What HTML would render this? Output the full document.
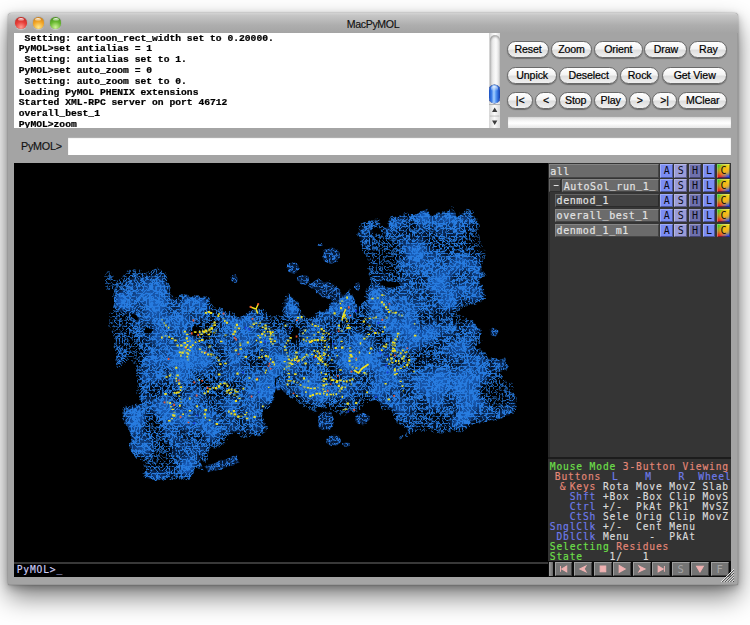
<!DOCTYPE html>
<html>
<head>
<meta charset="utf-8">
<title>MacPyMOL</title>
<style>
html,body{margin:0;padding:0;}
body{width:750px;height:625px;overflow:hidden;background:#fff;position:relative;font-family:"Liberation Sans",sans-serif;}
.abs{position:absolute;}
#win{position:absolute;left:8px;top:13.4px;width:729.5px;height:571.3px;background:#a4a4a4;border-radius:3.5px 3.5px 1.5px 1.5px;
 box-shadow:0 12px 26px rgba(0,0,0,0.5),0 3px 9px rgba(0,0,0,0.26),0 0 1.5px rgba(0,0,0,0.45),inset -1px 0 0 rgba(0,0,0,.06),inset 0 -1px 0 rgba(0,0,0,.08);}
#title{position:absolute;left:0;top:0;width:729.5px;height:19.6px;border-radius:3.5px 3.5px 0 0;
 background:linear-gradient(#d4d4d4 0%,#c6c6c6 12%,#aeaeae 60%,#a4a4a4 100%);}
#title span{position:absolute;left:0;width:730px;top:4.8px;text-align:center;font-size:10.6px;line-height:12px;color:#111;letter-spacing:-0.35px;-webkit-text-stroke:0.15px #111;}
.tl{position:absolute;top:4px;width:11.4px;height:11.4px;border-radius:50%;box-shadow:0 0 1px rgba(0,0,0,.55),0 1px 1px rgba(255,255,255,.55);}
.tl::after{content:"";position:absolute;left:2.6px;top:0.6px;width:6.2px;height:3.4px;border-radius:50%;background:linear-gradient(rgba(255,255,255,.95),rgba(255,255,255,.15));}
#log{position:absolute;left:6px;top:19.5px;width:475px;height:95.3px;background:#fff;overflow:hidden;}
#log pre{margin:0;position:absolute;left:4.8px;white-space:pre;font-family:"Liberation Mono",monospace;font-weight:bold;font-size:9.67px;line-height:11.61px;color:#000;-webkit-text-stroke:0.25px #000;transform:scaleY(0.93);transform-origin:0 0;}
#sb{position:absolute;left:481px;top:19.5px;width:11.4px;height:95.3px;overflow:hidden;background:linear-gradient(90deg,#cfcfcf,#f4f4f4 35%,#fdfdfd 60%,#dadada);}
.btn{position:absolute;height:17px;border-radius:9px;box-sizing:border-box;border:1px solid #6a6a6a;
 background:linear-gradient(#ffffff 0%,#f4f4f4 45%,#dedede 55%,#f0f0f0 100%);box-shadow:0 1px 1px rgba(0,0,0,.35);
 font-size:10.6px;line-height:15px;text-align:center;color:#000;white-space:nowrap;letter-spacing:-0.1px;-webkit-text-stroke:0.2px #000;}
#prog{position:absolute;left:499.5px;top:102.6px;width:223.5px;height:12.6px;background:linear-gradient(#d4d4d4,#f6f6f6 40%,#ffffff 60%,#e6e6e6);box-shadow:inset 0 1px 1px rgba(0,0,0,.25);}
#cmdlbl{position:absolute;left:13px;top:126.5px;font-size:10.8px;color:#111;letter-spacing:-0.25px;-webkit-text-stroke:0.15px #111;}
#cmd{position:absolute;left:60px;top:124.4px;width:663px;height:17.2px;background:#fff;box-shadow:inset 0 1px 1px rgba(0,0,0,.35);}
#view{position:absolute;left:6px;top:149.5px;width:534px;height:414.5px;background:#000;overflow:hidden;}
#panel{position:absolute;left:539.5px;top:149.5px;width:183.5px;height:414.5px;background:#353535;overflow:hidden;}
.mono{font-family:"DejaVu Sans Mono",monospace;font-size:11px;}

.nm{position:absolute;height:13.4px;box-shadow:inset 1px 1px 0 rgba(255,255,255,.18),inset -1px -1px 0 rgba(0,0,0,.35);overflow:hidden;}
.nm i{font-style:normal;position:relative;top:-1.7px;}
.nm span{position:absolute;left:1.4px;top:0.5px;-webkit-text-stroke:0.15px #e8e8e8;font-family:"DejaVu Sans Mono",monospace;font-size:10px;letter-spacing:0.55px;line-height:13px;color:#e4e4e4;white-space:pre;}
.ob{position:absolute;width:12.8px;height:13.4px;font-family:"DejaVu Sans Mono",monospace;font-size:10px;line-height:13px;text-align:center;color:#0a0a14;
 box-shadow:inset 1px 1px 0 rgba(255,255,255,.28),inset -1px -1px 0 rgba(0,0,30,.4);}
.obc{background:radial-gradient(circle at 55% 45%,#f8b418 0%,rgba(248,180,24,.85) 30%,rgba(248,180,24,0) 72%),conic-gradient(from 45deg at 50% 55%,#f8e818,#2c4cf0 25%,#f0281c 50%,#38c820 75%,#f8e818);}
.ml{-webkit-text-stroke:0.15px currentColor;position:absolute;left:2.3px;margin:0;font-family:"DejaVu Sans Mono",monospace;font-size:9.6px;letter-spacing:0.86px;line-height:10px;height:10px;white-space:pre;}
.cb{position:absolute;top:399.9px;width:17.9px;height:13.8px;background:#747474;box-shadow:inset 1px 1px 0 rgba(255,255,255,.3),inset -1px -1px 0 rgba(0,0,0,.45);}
.cb span{position:absolute;left:0;width:17.8px;top:0.8px;text-align:center;font-family:"DejaVu Sans Mono",monospace;font-size:10.5px;line-height:13.8px;color:#a4a4a4;}
</style>
</head>
<body>
<div id="win">
  <div id="title">
    <div class="tl" style="left:7.3px;background:radial-gradient(circle at 50% 85%,#ff9c90 0%,#e8403a 45%,#b4201c 100%);"></div>
    <div class="tl" style="left:24.7px;background:radial-gradient(circle at 50% 85%,#ffe88a 0%,#f2a628 48%,#c07210 100%);"></div>
    <div class="tl" style="left:42.1px;background:radial-gradient(circle at 50% 85%,#d0f49a 0%,#68b830 48%,#3c8416 100%);"></div>
    <span>MacPyMOL</span>
  </div>
  <div id="inner" style="position:absolute;left:0;top:-0.4px;">
  <div id="log"><pre style="top:1.00px"> Setting: cartoon_rect_width set to 0.20000.</pre><pre style="top:11.83px">PyMOL&gt;set antialias = 1</pre><pre style="top:22.66px"> Setting: antialias set to 1.</pre><pre style="top:33.49px">PyMOL&gt;set auto_zoom = 0</pre><pre style="top:44.32px"> Setting: auto_zoom set to 0.</pre><pre style="top:55.15px">Loading PyMOL PHENIX extensions</pre><pre style="top:65.98px">Started XML-RPC server on port 46712</pre><pre style="top:76.81px">overall_best_1</pre><pre style="top:87.64px">PyMOL&gt;zoom</pre></div>
  <div id="sb">
    <div style="position:absolute;left:0.6px;top:2.5px;width:10.2px;height:60px;border-radius:5.1px 5.1px 0 0;background:linear-gradient(90deg,#c4c4c4,#ececec 30%,#fbfbfb 60%,#d6d6d6);box-shadow:inset 0 2px 2px rgba(0,0,0,.28);"></div>
    <div style="position:absolute;left:0.3px;top:52px;width:10.6px;height:18px;border-radius:5.3px;background:linear-gradient(90deg,#1b4fc0 0%,#3a7ae6 22%,#a6d0ff 45%,#5a9af4 62%,#2a66d8 82%,#173fa6 100%);box-shadow:0 0 0 0.6px #15388f;"></div>
    <div style="position:absolute;left:2.2px;top:53px;width:6.8px;height:5px;border-radius:3.4px 3.4px 50% 50%;background:linear-gradient(rgba(255,255,255,.75),rgba(255,255,255,0));"></div>
    <div style="position:absolute;left:0;top:71.5px;width:11.4px;height:24.5px;background:linear-gradient(90deg,#d6d6d6,#fafafa 50%,#dcdcdc);border-top:1px solid #b4b4b4;"></div>
    <svg style="position:absolute;left:0;top:71.5px;" width="11.4" height="24.5" viewBox="0 0 12 25"><path d="M6 3.2 L8.8 8 L3.2 8 Z M6 21.8 L8.8 17 L3.2 17 Z" fill="#3c3c3c"/><path d="M1 12.3 H11" stroke="#b4b4b4" stroke-width="0.8"/></svg>
  </div>
  <div class="btn" style="left:499.4px;top:27.5px;width:41.2px;">Reset</div>
  <div class="btn" style="left:543px;top:27.5px;width:41px;">Zoom</div>
  <div class="btn" style="left:586px;top:27.5px;width:48.6px;">Orient</div>
  <div class="btn" style="left:636.4px;top:27.5px;width:43px;">Draw</div>
  <div class="btn" style="left:681.4px;top:27.5px;width:38px;">Ray</div>
  <div class="btn" style="left:499.4px;top:53.8px;width:49.6px;">Unpick</div>
  <div class="btn" style="left:551.4px;top:53.8px;width:58.6px;">Deselect</div>
  <div class="btn" style="left:612px;top:53.8px;width:39.4px;">Rock</div>
  <div class="btn" style="left:654px;top:53.8px;width:65.4px;">Get View</div>
  <div class="btn" style="left:499.4px;top:79.4px;width:25.6px;">|&lt;</div>
  <div class="btn" style="left:527px;top:79.4px;width:22px;">&lt;</div>
  <div class="btn" style="left:551px;top:79.4px;width:33.4px;">Stop</div>
  <div class="btn" style="left:586.4px;top:79.4px;width:32.6px;">Play</div>
  <div class="btn" style="left:620.6px;top:79.4px;width:22.4px;">&gt;</div>
  <div class="btn" style="left:644px;top:79.4px;width:25px;">&gt;|</div>
  <div class="btn" style="left:670px;top:79.4px;width:49.4px;">MClear</div>
  <div id="prog"></div>
  <div id="cmdlbl">PyMOL&gt;</div>
  <div id="cmd"></div>
  <div id="view"><!--MOL--><svg id="mol" style="position:absolute;left:0;top:0" width="534" height="414.5" viewBox="14 162.5 534 414.5">
<defs>
<filter id="mesh" filterUnits="userSpaceOnUse" x="80" y="190" width="460" height="310" color-interpolation-filters="sRGB">
 <feTurbulence type="fractalNoise" baseFrequency="0.09" numOctaves="2" seed="11" result="warp"/>
 <feDisplacementMap in="SourceGraphic" in2="warp" scale="9" xChannelSelector="R" yChannelSelector="G" result="shape"/>
 <feGaussianBlur in="shape" stdDeviation="4" result="blur0"/>
 <feColorMatrix in="blur0" type="matrix" values="0 0 0 0 1  0 0 0 0 1  0 0 0 0 1  1 0 0 1 -1" result="blur"/>
 <feTurbulence type="fractalNoise" baseFrequency="0.035" numOctaves="2" seed="23" result="n2"/>
 <feColorMatrix in="n2" type="matrix" values="0 0 0 0 1  0 0 0 0 1  0 0 0 0 1  2.2 0 0 0 -0.6" result="nm"/>
 <feComposite in="blur" in2="nm" operator="arithmetic" k1="0" k2="0.75" k3="0.5" k4="-0.25" result="dens"/>
 <feTurbulence type="turbulence" baseFrequency="0.30" numOctaves="2" seed="5" result="n"/>
 <feColorMatrix in="n" type="matrix" values="0 0 0 0 1  0 0 0 0 1  0 0 0 0 1  -4.2 0 0 0 1.42" result="lm"/>
 <feComposite in="lm" in2="dens" operator="arithmetic" k1="0" k2="1" k3="1.1" k4="-0.58" result="lm2"/>
 <feFlood flood-color="#277ce0" result="lc"/>
 <feComposite in="lc" in2="lm2" operator="in" result="lines"/>
 <feColorMatrix in="n2" type="matrix" values="0.08 0 0 0 -0.01  0.42 0 0 0 -0.06  0.9 0 0 0 -0.1  0 0 0 0 1" result="basec"/>
 <feComponentTransfer in="dens" result="bm"><feFuncA type="linear" slope="2.2" intercept="-0.8"/></feComponentTransfer>
 <feComposite in="basec" in2="bm" operator="in" result="base"/>
 <feMerge result="tb"><feMergeNode in="base"/><feMergeNode in="lines"/></feMerge>
 <feComposite in="tb" in2="shape" operator="in"/>
</filter>
<filter id="mesh2" filterUnits="userSpaceOnUse" x="80" y="190" width="460" height="310" color-interpolation-filters="sRGB">
 <feTurbulence type="fractalNoise" baseFrequency="0.12" numOctaves="2" seed="4" result="warp"/>
 <feDisplacementMap in="SourceGraphic" in2="warp" scale="5" xChannelSelector="R" yChannelSelector="G" result="shape"/>
 <feTurbulence type="turbulence" baseFrequency="0.30" numOctaves="2" seed="5" result="n"/>
 <feColorMatrix in="n" type="matrix" values="0 0 0 0 0.165  0 0 0 0 0.486  0 0 0 0 0.894  -4.2 0 0 0 1.3" result="lines"/>
 <feFlood flood-color="#061a38" result="bc"/>
 <feMerge result="tb"><feMergeNode in="bc"/><feMergeNode in="lines"/></feMerge>
 <feComposite in="tb" in2="shape" operator="in"/>
</filter>
</defs>
<g filter="url(#mesh)">
<path d="M103,276 108,272 114,275 120,278 126,272 130,269 140,268 146,272 150,272 158,268 166,274 170,286 172,296 178,298 186,295 194,296 206,296 214,304 224,306 230,310 240,318 246,314 254,310 264,310 274,316 282,312 284,298 290,294 296,300 300,310 310,318 316,312 318,306 322,312 334,300 322,294 310,286 316,280 328,282 334,290 342,296 350,288 354,296 358,306 366,300 367,282 371,274 367,265 366,254 361,244 357,235 360,226 362,222 370,221 378,218 386,227 390,217 404,214 416,212 426,209 430,215 438,211 450,210 452,203 454,210 458,217 466,209 474,209 477,219 479,235 484,249 485,259 482,265 485,273 479,281 486,289 486,297 478,301 468,307 460,306 456,312 470,318 480,328 483,340 476,348 484,350 488,358 496,360 504,357 509,364 506,370 500,372 508,380 514,388 516,400 512,412 506,416 490,420 478,423 460,430 444,433 420,432 400,437 406,428 400,426 394,416 390,408 382,410 380,400 370,402 358,408 354,414 344,416 334,410 320,408 310,412 296,400 282,392 278,376 274,398 264,410 266,430 258,438 242,434 234,431 228,440 220,448 210,446 206,461 198,454 204,470 194,468 190,481 174,479 156,481 142,476 144,462 130,450 128,430 122,414 124,406 142,402 136,390 136,370 130,358 118,369 116,356 114,340 110,326 109,316 114,302 114,290 106,288Z M290,334 a4,10 0 1,0 8,0 a4,10 0 1,0 -8,0Z M275.5,383 a2.5,7 0 1,0 5.0,0 a2.5,7 0 1,0 -5.0,0Z M378,283 a12,4 0 1,0 24,0 a12,4 0 1,0 -24,0Z M373,229 a5,4 0 1,0 10,0 a5,4 0 1,0 -10,0Z M192,330 a4,5 0 1,0 8,0 a4,5 0 1,0 -8,0Z M144,330 a4,3 0 1,0 8,0 a4,3 0 1,0 -8,0Z M131,316 a4,3 0 1,0 8,0 a4,3 0 1,0 -8,0Z" fill="#fff" fill-rule="evenodd"/>
<clipPath id="mc"><path d="M103,276 108,272 114,275 120,278 126,272 130,269 140,268 146,272 150,272 158,268 166,274 170,286 172,296 178,298 186,295 194,296 206,296 214,304 224,306 230,310 240,318 246,314 254,310 264,310 274,316 282,312 284,298 290,294 296,300 300,310 310,318 316,312 318,306 322,312 334,300 322,294 310,286 316,280 328,282 334,290 342,296 350,288 354,296 358,306 366,300 367,282 371,274 367,265 366,254 361,244 357,235 360,226 362,222 370,221 378,218 386,227 390,217 404,214 416,212 426,209 430,215 438,211 450,210 452,203 454,210 458,217 466,209 474,209 477,219 479,235 484,249 485,259 482,265 485,273 479,281 486,289 486,297 478,301 468,307 460,306 456,312 470,318 480,328 483,340 476,348 484,350 488,358 496,360 504,357 509,364 506,370 500,372 508,380 514,388 516,400 512,412 506,416 490,420 478,423 460,430 444,433 420,432 400,437 406,428 400,426 394,416 390,408 382,410 380,400 370,402 358,408 354,414 344,416 334,410 320,408 310,412 296,400 282,392 278,376 274,398 264,410 266,430 258,438 242,434 234,431 228,440 220,448 210,446 206,461 198,454 204,470 194,468 190,481 174,479 156,481 142,476 144,462 130,450 128,430 122,414 124,406 142,402 136,390 136,370 130,358 118,369 116,356 114,340 110,326 109,316 114,302 114,290 106,288Z M290,334 a4,10 0 1,0 8,0 a4,10 0 1,0 -8,0Z M275.5,383 a2.5,7 0 1,0 5.0,0 a2.5,7 0 1,0 -5.0,0Z M378,283 a12,4 0 1,0 24,0 a12,4 0 1,0 -24,0Z M373,229 a5,4 0 1,0 10,0 a5,4 0 1,0 -10,0Z M192,330 a4,5 0 1,0 8,0 a4,5 0 1,0 -8,0Z M144,330 a4,3 0 1,0 8,0 a4,3 0 1,0 -8,0Z M131,316 a4,3 0 1,0 8,0 a4,3 0 1,0 -8,0Z" clip-rule="evenodd"/></clipPath>
<radialGradient id="dg"><stop offset="0" stop-color="#000" stop-opacity="1"/><stop offset="0.55" stop-color="#000" stop-opacity="0.75"/><stop offset="1" stop-color="#000" stop-opacity="0"/></radialGradient>
<g clip-path="url(#mc)" fill="url(#dg)">
<ellipse cx="136" cy="353" rx="16" ry="20" opacity="0.6" transform="rotate(0 136 353)"/>
<ellipse cx="118" cy="318" rx="13" ry="17" opacity="0.5" transform="rotate(0 118 318)"/>
<ellipse cx="385" cy="253" rx="27" ry="29" opacity="0.5" transform="rotate(0 385 253)"/>
<ellipse cx="444" cy="318" rx="50" ry="12" opacity="0.6" transform="rotate(-12 444 318)"/>
<ellipse cx="432" cy="417" rx="32" ry="18" opacity="0.5" transform="rotate(-10 432 417)"/>
<ellipse cx="168" cy="458" rx="32" ry="20" opacity="0.45" transform="rotate(0 168 458)"/>
<ellipse cx="493" cy="396" rx="18" ry="18" opacity="0.45" transform="rotate(0 493 396)"/>
<ellipse cx="113" cy="288" rx="13" ry="13" opacity="0.45" transform="rotate(0 113 288)"/>
<ellipse cx="228" cy="444" rx="18" ry="13" opacity="0.4" transform="rotate(0 228 444)"/>
<ellipse cx="300" cy="330" rx="10" ry="26" opacity="0.4" transform="rotate(0 300 330)"/>
<ellipse cx="478" cy="250" rx="10" ry="36" opacity="0.35" transform="rotate(0 478 250)"/>
<ellipse cx="355" cy="395" rx="36" ry="10" opacity="0.35" transform="rotate(0 355 395)"/>
<ellipse cx="415" cy="230" rx="30" ry="10" opacity="0.3" transform="rotate(0 415 230)"/>
<ellipse cx="150" cy="420" rx="14" ry="14" opacity="0.35" transform="rotate(0 150 420)"/>
</g>
</g>
<g filter="url(#mesh2)">
<ellipse cx="331" cy="255" rx="9" ry="8" fill="#fff"/>
<ellipse cx="293" cy="267" rx="6" ry="5" fill="#fff"/>
<ellipse cx="304" cy="279" rx="6" ry="4.5" fill="#fff"/>
<ellipse cx="234" cy="278" rx="4" ry="3.5" fill="#fff"/>
<ellipse cx="494" cy="332" rx="3.5" ry="4" fill="#fff"/>
<ellipse cx="326" cy="421" rx="8" ry="10" fill="#fff"/>
<ellipse cx="334" cy="440" rx="7" ry="6" fill="#fff"/>
<ellipse cx="362" cy="418" rx="8" ry="6" fill="#fff"/>
<ellipse cx="346" cy="444" rx="4" ry="2" fill="#fff"/>
<ellipse cx="358" cy="286" rx="3" ry="4" fill="#fff"/>
<ellipse cx="321" cy="244" rx="3" ry="1.5" fill="#fff"/>
<polygon points="205,466 236,455 240,462 208,473" fill="#fff"/>
<polygon points="308,285 317,279 331,282 344,295 337,302 322,296" fill="#fff"/>
</g>
<path d="M334.9,347.6h1.7v1.8h-1.7zM289.3,327.2h1.7v1.8h-1.7zM317.9,350.9h1.7v2.1h-1.7zM257.9,390.9h1.7v1.4h-1.7zM355.0,309.5h1.7v2.1h-1.7zM374.0,329.6h1.7v2.1h-1.7zM314.5,357.2h1.7v1.8h-1.7zM347.5,410.2h1.7v1.8h-1.7zM332.4,342.5h1.7v1.4h-1.7zM242.2,371.0h1.7v2.1h-1.7zM329.6,332.7h1.7v1.4h-1.7zM386.5,354.4h1.7v1.8h-1.7zM379.5,351.1h1.7v2.1h-1.7zM230.2,391.9h1.7v1.4h-1.7zM248.5,327.8h1.7v2.1h-1.7zM333.4,377.9h1.7v1.8h-1.7zM386.6,371.0h1.7v1.8h-1.7zM395.6,368.9h1.7v2.1h-1.7zM264.3,340.8h1.7v1.4h-1.7zM377.6,321.6h1.7v1.8h-1.7zM244.9,326.2h1.7v2.1h-1.7zM196.4,414.3h1.7v1.4h-1.7zM375.2,395.7h1.7v1.8h-1.7zM193.4,421.7h1.7v1.8h-1.7zM385.2,364.0h1.7v2.1h-1.7z" fill="#1838e8" opacity="0.95"/>
<path d="M204.8,351.0h1.7v1.4h-1.7zM381.5,318.2h1.7v2.1h-1.7zM268.7,362.2h1.7v1.8h-1.7zM329.8,382.9h1.7v1.4h-1.7zM337.8,330.1h1.7v1.4h-1.7zM295.9,318.8h1.7v1.8h-1.7zM173.2,403.3h1.7v2.1h-1.7zM348.0,305.8h1.7v2.1h-1.7zM184.9,346.6h1.7v1.8h-1.7zM394.0,353.9h1.7v2.1h-1.7zM314.4,355.4h1.7v1.8h-1.7zM222.7,312.2h1.7v1.8h-1.7zM326.9,389.2h1.7v2.1h-1.7zM197.3,333.3h1.7v2.1h-1.7zM355.3,357.2h1.7v1.4h-1.7zM237.6,352.9h1.7v1.4h-1.7zM349.4,314.4h1.7v1.4h-1.7zM256.3,377.3h1.7v1.4h-1.7zM388.5,302.7h1.7v1.4h-1.7zM292.8,392.2h1.7v1.4h-1.7zM192.6,318.8h1.7v2.1h-1.7zM177.9,379.0h1.7v1.8h-1.7zM250.7,395.1h1.7v1.8h-1.7zM233.8,336.2h1.7v2.1h-1.7zM235.3,337.9h1.7v2.1h-1.7zM295.7,335.1h1.7v1.8h-1.7zM251.7,317.5h1.7v1.8h-1.7zM206.7,386.3h1.7v2.1h-1.7zM187.6,421.3h1.7v1.4h-1.7zM267.7,364.8h1.7v1.4h-1.7zM269.8,367.5h1.7v1.4h-1.7zM163.7,401.0h1.7v1.8h-1.7zM167.7,357.6h1.7v1.8h-1.7zM310.4,340.8h1.7v1.4h-1.7zM193.4,380.9h1.7v1.8h-1.7zM353.3,408.3h1.7v2.1h-1.7zM336.9,374.4h1.7v1.8h-1.7zM201.3,379.6h1.7v1.4h-1.7zM406.4,346.9h1.7v1.4h-1.7zM179.7,415.6h1.7v1.8h-1.7zM190.9,331.8h1.7v2.1h-1.7zM296.8,360.5h1.7v1.4h-1.7zM393.3,394.5h1.7v1.8h-1.7zM350.6,370.2h1.7v1.8h-1.7zM195.8,393.9h1.7v2.1h-1.7z" fill="#f0542c" opacity="0.95"/>
<path d="M310.8,339.3h2.5v2.1h-2.5zM313.8,338.8h2.2v1.8h-2.2zM316.5,338.6h2.5v2.1h-2.5zM320.6,338.7h1.8v1.8h-1.8zM324.0,339.4h2.2v1.4h-2.2zM273.6,363.0h1.4v2.1h-1.4zM271.8,360.8h2.5v1.8h-2.5zM269.9,357.7h1.4v2.1h-1.4zM267.5,355.1h1.4v2.1h-1.4zM264.9,354.6h2.2v1.8h-2.2zM261.3,355.3h1.4v2.1h-1.4zM258.3,356.2h1.8v1.8h-1.8zM238.4,397.2h2.2v1.4h-2.2zM230.5,391.4h1.4v1.4h-1.4zM200.4,333.0h2.2v1.4h-2.2zM203.1,330.7h2.2v2.1h-2.2zM206.2,330.2h1.4v1.8h-1.4zM289.9,379.7h1.8v1.4h-1.8zM293.4,380.1h1.4v1.8h-1.4zM299.6,383.8h1.8v1.4h-1.8zM306.7,386.5h2.5v1.4h-2.5zM309.6,387.2h2.5v1.4h-2.5zM313.4,387.0h2.5v1.8h-2.5zM269.1,330.5h2.2v1.4h-2.2zM270.1,333.5h1.4v1.4h-1.4zM269.2,337.5h1.8v1.8h-1.8zM270.0,340.3h2.2v1.8h-2.2zM271.8,342.7h1.8v1.4h-1.8zM273.6,339.8h2.2v1.8h-2.2zM264.6,334.0h1.4v2.1h-1.4zM385.4,343.0h1.8v2.1h-1.8zM382.8,345.0h2.2v1.4h-2.2zM380.9,348.7h1.8v1.8h-1.8zM317.2,362.4h2.2v1.4h-2.2zM319.4,359.1h1.4v1.8h-1.4zM321.3,357.0h1.8v1.4h-1.8zM322.6,354.1h2.2v1.4h-2.2zM323.1,351.4h1.4v1.8h-1.4zM327.9,345.5h1.4v2.1h-1.4zM252.5,323.2h2.5v1.4h-2.5zM255.4,321.9h1.8v1.4h-1.8zM339.7,302.3h1.4v1.4h-1.4zM346.2,296.1h1.8v2.1h-1.8zM302.7,338.0h1.8v2.1h-1.8zM305.5,339.9h1.4v1.4h-1.4zM309.0,340.4h2.5v2.1h-2.5zM363.3,337.2h2.2v1.8h-2.2zM367.5,333.2h2.5v1.4h-2.5zM393.8,349.2h2.2v2.1h-2.2zM392.0,346.9h1.4v1.8h-1.4zM391.9,340.9h2.2v2.1h-2.2zM394.4,338.0h2.2v2.1h-2.2zM396.7,335.1h1.4v1.8h-1.4zM396.9,332.2h2.5v1.8h-2.5zM324.3,352.8h1.8v1.4h-1.8zM323.7,348.7h1.4v1.4h-1.4zM324.0,345.5h1.8v1.4h-1.8zM321.3,335.9h2.5v2.1h-2.5zM322.2,332.7h2.5v1.4h-2.5zM210.4,326.5h2.2v1.4h-2.2zM207.5,333.3h2.5v1.4h-2.5zM390.3,356.9h2.5v2.1h-2.5zM390.3,352.9h1.4v2.1h-1.4zM391.6,349.6h2.5v2.1h-2.5zM393.5,347.5h1.4v1.8h-1.4zM394.4,344.1h1.4v1.8h-1.4zM393.7,341.5h1.8v1.8h-1.8zM178.8,351.0h2.2v1.8h-2.2zM182.4,351.4h1.4v1.8h-1.4zM185.8,351.7h2.2v1.4h-2.2zM311.1,353.2h1.8v1.4h-1.8zM315.0,354.3h1.8v2.1h-1.8zM317.0,356.4h1.8v1.4h-1.8zM319.5,358.6h2.5v1.8h-2.5zM322.0,360.3h1.4v1.4h-1.4zM324.3,362.8h2.2v2.1h-2.2zM261.7,326.0h1.8v1.4h-1.8zM264.9,327.1h2.2v1.8h-2.2zM267.0,330.5h1.4v1.4h-1.4zM269.8,332.1h2.2v1.4h-2.2zM313.4,349.5h1.8v1.8h-1.8zM316.5,349.9h2.2v1.8h-2.2zM318.5,351.8h1.4v2.1h-1.4zM319.1,354.8h2.5v2.1h-2.5zM318.2,357.3h1.8v2.1h-1.8zM203.6,392.0h2.2v1.8h-2.2zM206.9,390.0h2.2v2.1h-2.2zM208.7,387.8h2.2v1.4h-2.2zM212.0,386.7h1.8v1.4h-1.8zM214.7,386.6h2.5v2.1h-2.5zM217.7,384.4h2.2v1.4h-2.2zM219.7,382.5h1.8v1.8h-1.8zM223.3,382.0h2.5v1.8h-2.5zM404.5,351.3h1.4v1.4h-1.4zM402.8,354.9h2.2v1.8h-2.2zM401.2,357.1h2.5v1.8h-2.5zM398.0,359.6h1.4v2.1h-1.4zM395.0,359.6h1.8v1.8h-1.8zM391.3,361.4h2.2v1.4h-2.2zM348.3,326.5h2.5v1.8h-2.5zM347.5,324.0h1.8v1.8h-1.8zM346.2,320.0h1.4v1.8h-1.4zM345.4,317.2h1.4v1.8h-1.4zM344.1,313.7h1.8v1.8h-1.8zM213.5,321.0h2.2v2.1h-2.2zM213.5,323.8h2.5v1.8h-2.5zM210.9,327.1h2.2v2.1h-2.2zM208.5,328.1h2.2v1.8h-2.2zM204.6,329.1h2.5v2.1h-2.5zM202.0,330.0h2.5v1.8h-2.5zM198.8,330.3h1.8v2.1h-1.8zM194.7,330.7h1.8v1.8h-1.8zM257.4,334.4h1.8v1.4h-1.8zM261.1,332.6h2.2v1.8h-2.2zM263.5,330.5h1.8v1.8h-1.8zM264.4,323.9h2.2v2.1h-2.2zM176.5,343.9h2.2v2.1h-2.2zM180.1,343.9h2.5v2.1h-2.5zM183.5,341.5h2.5v1.8h-2.5zM326.0,393.2h1.4v2.1h-1.4zM323.6,390.2h2.5v1.4h-2.5zM322.4,387.9h1.8v1.4h-1.8zM322.4,383.8h2.5v2.1h-2.5zM323.0,380.1h1.8v1.4h-1.8zM324.7,377.8h2.5v1.8h-2.5zM393.8,368.8h2.2v2.1h-2.2zM397.4,368.7h1.4v1.4h-1.4zM399.6,367.2h2.2v1.4h-2.2zM403.4,365.5h1.8v1.4h-1.8zM406.1,363.6h2.2v2.1h-2.2zM408.1,358.4h2.2v2.1h-2.2zM305.2,390.7h1.4v1.8h-1.4zM296.2,394.4h1.4v2.1h-1.4zM167.9,326.3h1.4v1.8h-1.4zM165.3,324.1h1.4v1.8h-1.4zM176.6,390.9h2.2v2.1h-2.2zM179.0,404.1h1.8v2.1h-1.8zM295.1,350.9h2.5v2.1h-2.5zM295.4,357.0h2.2v1.4h-2.2zM374.1,331.5h2.5v2.1h-2.5zM382.0,330.5h1.8v1.4h-1.8zM300.7,315.6h1.8v2.1h-1.8zM297.0,316.6h2.2v1.4h-2.2zM289.3,336.4h2.5v1.8h-2.5zM287.1,339.3h2.2v1.8h-2.2zM285.7,341.9h1.4v1.4h-1.4zM284.0,345.2h1.8v1.8h-1.8zM284.2,348.8h2.5v1.4h-2.5zM287.8,358.0h2.2v1.8h-2.2zM311.6,323.0h1.4v1.8h-1.4zM314.2,324.4h2.5v1.8h-2.5zM317.6,325.1h1.4v1.4h-1.4zM320.5,327.6h2.2v2.1h-2.2zM323.1,329.5h1.8v1.8h-1.8zM328.2,332.5h1.4v1.8h-1.4zM186.4,355.3h1.8v1.8h-1.8zM187.3,352.2h1.8v2.1h-1.8zM188.9,349.3h1.8v1.4h-1.8zM189.8,345.5h1.8v2.1h-1.8zM191.9,343.7h1.8v1.8h-1.8zM194.6,341.0h1.8v1.4h-1.8zM198.5,339.5h1.8v2.1h-1.8zM201.0,338.5h2.5v2.1h-2.5zM305.7,353.2h1.8v1.8h-1.8zM303.9,355.4h1.8v1.4h-1.8zM301.4,358.1h1.4v2.1h-1.4zM297.7,358.9h2.2v2.1h-2.2zM293.9,359.0h2.5v1.4h-2.5zM283.7,367.8h1.4v1.4h-1.4zM337.7,384.3h2.2v2.1h-2.2zM341.4,386.0h1.8v1.4h-1.8zM344.5,386.0h1.4v1.4h-1.4zM232.2,332.7h2.5v1.8h-2.5zM233.7,330.1h2.5v2.1h-2.5zM235.8,323.3h2.2v2.1h-2.2zM349.2,349.9h2.5v1.4h-2.5zM349.4,353.6h2.5v1.8h-2.5zM348.7,356.7h1.4v1.4h-1.4zM348.4,359.3h2.2v2.1h-2.2zM355.3,366.8h2.2v1.4h-2.2zM228.2,410.1h1.4v2.1h-1.4zM230.4,411.9h1.8v2.1h-1.8zM233.6,412.8h2.5v2.1h-2.5zM237.1,414.9h2.5v2.1h-2.5zM244.2,413.4h2.2v1.4h-2.2zM246.0,411.4h1.4v1.4h-1.4zM204.7,416.3h1.4v1.8h-1.4zM203.7,412.7h2.2v2.1h-2.2zM204.4,408.6h2.5v2.1h-2.5zM315.5,392.4h1.8v1.8h-1.8zM311.8,393.6h2.2v1.8h-2.2zM309.3,394.6h2.2v2.1h-2.2zM227.9,388.6h1.8v1.8h-1.8zM230.6,388.1h1.8v1.8h-1.8zM234.2,388.6h1.4v2.1h-1.4zM236.5,390.7h2.2v1.4h-2.2zM169.3,401.5h1.8v2.1h-1.8zM170.3,405.5h1.4v1.4h-1.4zM171.5,408.2h2.5v1.4h-2.5zM173.0,414.1h2.5v2.1h-2.5zM171.1,417.4h1.8v1.4h-1.8zM168.0,419.6h2.5v1.4h-2.5zM380.8,300.7h2.2v2.1h-2.2zM383.1,302.9h1.8v2.1h-1.8zM385.0,305.7h2.2v2.1h-2.2zM386.5,308.2h2.5v1.4h-2.5zM388.1,310.4h1.8v2.1h-1.8zM394.8,311.3h2.2v1.4h-2.2zM219.3,362.7h2.2v1.8h-2.2zM217.8,359.0h1.8v1.8h-1.8zM210.0,352.9h2.5v1.4h-2.5zM207.1,353.0h2.2v2.1h-2.2zM204.0,351.4h1.4v2.1h-1.4zM198.8,347.9h2.2v1.4h-2.2zM180.2,354.1h1.4v2.1h-1.4zM181.3,351.1h2.2v2.1h-2.2zM184.5,345.8h2.5v1.4h-2.5zM186.5,343.6h1.8v2.1h-1.8zM186.9,340.2h1.8v1.4h-1.8zM185.7,336.8h2.2v2.1h-2.2zM186.0,333.2h2.5v1.4h-2.5zM183.8,330.3h2.2v1.8h-2.2zM161.0,335.9h1.8v2.1h-1.8zM168.4,335.4h1.4v2.1h-1.4zM171.0,337.3h2.5v1.4h-2.5zM174.2,339.0h2.5v1.8h-2.5zM296.2,355.3h1.8v1.8h-1.8zM293.6,357.6h1.4v1.4h-1.4zM291.2,359.0h1.8v1.4h-1.8zM289.2,362.1h2.5v1.4h-2.5zM287.5,372.4h2.5v1.4h-2.5zM288.4,375.5h1.4v2.1h-1.4zM287.5,379.6h2.2v1.4h-2.2zM368.7,317.2h2.2v1.4h-2.2zM375.4,315.7h1.4v2.1h-1.4zM176.3,374.0h2.5v1.8h-2.5zM175.3,377.0h1.8v1.8h-1.8zM175.8,379.8h1.4v1.4h-1.4zM178.1,382.1h2.2v2.1h-2.2zM179.7,385.7h2.5v1.8h-2.5zM179.7,388.7h1.8v1.8h-1.8zM178.5,391.1h1.4v1.4h-1.4zM332.2,378.5h2.2v2.1h-2.2zM336.0,379.4h2.5v1.8h-2.5zM339.2,378.9h2.5v1.8h-2.5zM342.9,380.1h1.8v1.4h-1.8zM345.8,379.8h1.8v2.1h-1.8zM349.1,379.0h1.8v1.8h-1.8zM351.7,377.8h1.8v2.1h-1.8zM315.9,392.3h2.5v1.4h-2.5zM319.1,392.2h1.8v2.1h-1.8zM323.1,392.0h1.4v2.1h-1.4zM326.5,393.1h1.4v1.8h-1.4zM329.5,393.3h2.5v1.4h-2.5zM332.7,392.9h1.4v2.1h-1.4zM335.6,392.7h1.4v1.8h-1.4zM340.7,387.2h1.8v2.1h-1.8zM255.8,339.3h1.4v1.4h-1.4zM386.7,358.1h1.4v1.8h-1.4zM242.5,387.3h1.8v1.8h-1.8zM173.6,391.5h1.8v1.8h-1.8zM381.4,293.5h1.4v2.1h-1.4zM188.8,409.6h2.2v1.4h-2.2zM234.9,399.5h2.2v2.1h-2.2zM384.5,382.6h2.2v1.4h-2.2zM362.7,319.9h2.2v2.1h-2.2zM395.7,372.4h2.2v1.4h-2.2zM284.6,324.3h1.8v1.8h-1.8zM324.6,373.1h2.5v1.4h-2.5zM220.0,340.3h2.5v1.4h-2.5zM246.7,340.9h2.2v2.1h-2.2zM383.7,325.7h1.8v2.1h-1.8zM283.6,360.4h2.2v1.4h-2.2zM224.3,362.3h2.5v1.4h-2.5zM259.6,340.7h2.5v1.8h-2.5zM217.9,373.1h2.5v1.8h-2.5zM302.3,331.9h1.4v1.8h-1.4zM366.2,390.9h1.8v1.8h-1.8zM334.6,346.4h2.2v2.1h-2.2zM294.1,372.7h2.5v1.8h-2.5zM317.3,331.0h2.2v1.4h-2.2zM304.3,362.1h2.5v1.8h-2.5zM271.9,330.7h1.8v1.8h-1.8zM394.4,311.4h1.8v1.8h-1.8zM358.7,350.9h1.4v2.1h-1.4zM346.3,326.4h2.2v2.1h-2.2zM413.3,370.3h1.4v1.4h-1.4zM320.6,371.3h1.4v1.8h-1.4zM302.7,356.5h1.8v1.4h-1.8zM204.8,311.5h2.2v1.8h-2.2zM330.7,378.7h1.8v1.8h-1.8zM302.9,376.8h2.2v2.1h-2.2zM341.0,346.1h2.5v2.1h-2.5zM330.9,358.7h1.8v1.4h-1.8zM168.8,374.5h1.8v1.4h-1.8zM291.0,362.7h2.5v1.8h-2.5zM260.7,348.9h2.2v1.4h-2.2zM343.4,313.7h1.8v1.8h-1.8zM340.0,306.6h2.2v2.1h-2.2zM165.5,375.8h2.2v1.4h-2.2zM237.2,415.4h2.2v1.8h-2.2zM209.8,311.5h2.5v2.1h-2.5zM264.7,371.2h1.4v1.8h-1.4zM261.9,405.0h1.8v1.8h-1.8zM398.2,362.4h1.4v1.4h-1.4zM265.5,369.0h1.4v1.8h-1.4zM333.5,311.8h2.2v2.1h-2.2zM208.8,418.9h1.8v1.4h-1.8zM359.8,341.8h1.4v2.1h-1.4zM175.8,391.4h1.4v2.1h-1.4zM336.5,354.4h1.4v1.4h-1.4zM189.1,396.9h1.4v2.1h-1.4zM253.5,415.6h2.2v1.8h-2.2zM164.3,392.6h2.5v1.8h-2.5zM327.6,354.3h1.4v1.4h-1.4zM234.9,390.7h2.2v1.4h-2.2zM394.2,367.6h1.4v1.8h-1.4zM234.7,348.9h2.5v1.8h-2.5zM304.4,328.9h1.8v2.1h-1.8zM371.4,297.3h2.2v1.4h-2.2zM355.1,401.4h2.2v2.1h-2.2zM218.3,312.4h1.4v2.1h-1.4zM369.8,347.0h2.5v2.1h-2.5zM340.5,340.2h2.2v1.4h-2.2zM239.4,347.8h2.5v1.4h-2.5zM325.3,383.0h2.2v1.4h-2.2zM321.6,360.4h1.8v1.8h-1.8zM406.1,350.8h1.4v1.4h-1.4zM313.4,333.7h1.4v1.4h-1.4zM286.6,383.0h1.8v2.1h-1.8zM225.9,321.2h2.2v2.1h-2.2zM248.5,376.8h1.8v1.4h-1.8zM228.9,391.9h1.8v1.8h-1.8zM393.8,373.3h2.5v1.4h-2.5zM363.3,371.4h2.2v1.8h-2.2zM198.6,378.8h1.4v1.4h-1.4zM207.7,310.4h2.5v2.1h-2.5zM193.8,330.8h1.4v1.4h-1.4zM237.7,327.0h2.5v1.8h-2.5zM182.2,413.0h1.8v1.4h-1.8zM232.8,409.5h2.2v2.1h-2.2zM402.0,348.9h1.8v1.8h-1.8zM215.6,422.4h2.5v2.1h-2.5zM225.9,389.7h2.5v1.4h-2.5zM401.6,384.7h1.8v1.8h-1.8zM323.3,377.4h2.2v1.4h-2.2zM399.6,380.2h2.2v1.4h-2.2zM339.3,368.8h2.5v1.4h-2.5zM217.4,314.5h1.8v2.1h-1.8zM186.6,348.4h2.5v1.4h-2.5zM226.6,384.6h1.8v1.8h-1.8zM413.9,322.7h1.4v1.4h-1.4zM268.0,386.2h1.4v1.4h-1.4zM196.2,404.7h1.8v2.1h-1.8zM403.3,360.0h1.4v1.4h-1.4zM345.0,407.9h2.5v1.4h-2.5zM413.9,334.3h2.5v1.8h-2.5zM224.1,319.4h1.4v2.1h-1.4zM399.9,351.7h1.8v2.1h-1.8zM259.1,336.3h2.2v1.4h-2.2zM368.9,351.7h1.4v1.8h-1.4zM338.1,324.1h1.8v2.1h-1.8zM172.2,413.6h1.4v2.1h-1.4zM335.4,381.1h2.5v1.4h-2.5zM239.5,344.1h1.8v1.4h-1.8zM390.3,309.7h1.4v1.4h-1.4zM346.5,402.1h2.5v2.1h-2.5zM384.6,345.8h2.2v1.4h-2.2zM341.6,395.3h1.4v2.1h-1.4zM218.0,385.1h2.2v2.1h-2.2zM350.3,355.0h2.5v2.1h-2.5zM387.6,397.9h2.5v1.8h-2.5zM255.6,378.3h2.5v1.8h-2.5zM244.5,355.5h2.5v1.8h-2.5zM175.2,366.2h2.2v2.1h-2.2zM245.8,417.3h2.5v1.4h-2.5zM306.5,336.6h1.4v1.4h-1.4zM236.4,372.1h2.2v2.1h-2.2z" fill="#f2e21c" opacity="0.95"/>
<path d="M308.1,339.4h1.4v1.4h-1.4zM327.3,337.9h2.5v1.4h-2.5zM236.0,395.3h1.8v1.4h-1.8zM233.5,393.4h2.2v1.8h-2.2zM198.7,336.2h2.5v1.4h-2.5zM209.7,330.6h2.2v1.8h-2.2zM213.0,331.3h2.5v1.8h-2.5zM296.5,381.3h1.8v1.4h-1.8zM303.3,385.6h2.2v2.1h-2.2zM268.5,327.5h1.8v1.8h-1.8zM270.9,337.7h2.2v1.8h-2.2zM268.5,334.9h2.5v1.8h-2.5zM325.8,348.2h2.2v2.1h-2.2zM251.1,325.7h2.2v1.8h-2.2zM259.4,321.3h1.8v2.1h-1.8zM340.8,299.7h2.5v1.8h-2.5zM365.8,335.6h2.5v1.4h-2.5zM397.9,354.7h2.2v1.4h-2.2zM396.4,351.1h2.2v1.4h-2.2zM391.7,343.6h2.5v2.1h-2.5zM324.4,342.8h1.4v1.4h-1.4zM322.3,339.2h1.8v1.8h-1.8zM212.3,324.0h1.4v2.1h-1.4zM207.9,329.5h2.2v1.4h-2.2zM390.4,359.8h1.8v1.4h-1.8zM307.3,354.5h1.4v1.8h-1.4zM327.1,364.0h1.4v2.1h-1.4zM258.0,324.2h1.4v2.1h-1.4zM272.5,333.8h1.8v1.8h-1.8zM225.9,382.8h1.8v1.8h-1.8zM388.0,362.4h2.2v2.1h-2.2zM264.0,327.3h2.5v1.4h-2.5zM407.0,361.1h2.5v2.1h-2.5zM408.3,355.0h1.8v1.8h-1.8zM163.6,321.6h1.4v2.1h-1.4zM161.3,318.5h1.4v1.4h-1.4zM178.3,394.5h1.8v2.1h-1.8zM180.0,398.1h1.4v1.4h-1.4zM180.4,401.0h1.4v1.4h-1.4zM294.4,354.0h1.4v2.1h-1.4zM297.1,359.6h2.2v1.8h-2.2zM368.3,324.2h2.2v2.1h-2.2zM369.9,327.4h1.4v1.8h-1.4zM371.9,329.9h2.5v1.4h-2.5zM378.0,331.6h1.4v1.8h-1.4zM286.2,351.5h1.8v1.4h-1.8zM287.0,354.9h2.2v1.8h-2.2zM325.7,331.4h1.8v1.8h-1.8zM187.1,358.0h1.8v2.1h-1.8zM290.4,359.2h1.8v1.8h-1.8zM287.5,361.8h1.4v2.1h-1.4zM285.7,365.4h1.8v1.8h-1.8zM234.4,326.1h1.8v1.8h-1.8zM349.0,346.7h2.2v1.8h-2.2zM349.2,363.2h1.4v1.8h-1.4zM351.7,365.5h1.8v1.8h-1.8zM240.4,415.0h2.2v1.4h-2.2zM225.8,390.9h2.5v2.1h-2.5zM173.2,411.2h2.2v1.4h-2.2zM391.5,311.6h2.5v1.4h-2.5zM398.2,313.7h1.8v1.4h-1.8zM401.0,314.1h2.2v1.8h-2.2zM215.7,356.3h2.2v1.8h-2.2zM212.8,353.8h1.4v1.4h-1.4zM200.9,350.6h2.5v1.8h-2.5zM183.6,349.2h1.8v2.1h-1.8zM164.6,334.5h2.2v1.4h-2.2zM287.9,364.8h2.5v1.8h-2.5zM287.2,368.9h2.2v1.4h-2.2zM364.8,317.5h1.8v2.1h-1.8zM372.6,316.4h2.2v2.1h-2.2zM329.3,375.9h2.5v2.1h-2.5zM338.5,389.7h2.5v2.1h-2.5zM188.4,414.5h2.2v1.4h-2.2zM169.6,372.9h1.8v2.1h-1.8zM224.4,333.7h2.2v2.1h-2.2zM208.7,344.5h2.5v1.4h-2.5zM337.8,327.6h2.2v1.4h-2.2zM376.6,296.6h2.2v1.8h-2.2zM402.7,389.6h1.4v1.4h-1.4zM215.4,329.3h1.4v1.4h-1.4zM189.4,339.4h1.4v2.1h-1.4zM166.6,400.8h1.8v2.1h-1.8zM208.2,345.8h2.5v1.8h-2.5zM350.4,382.6h1.4v2.1h-1.4zM289.3,361.6h1.8v2.1h-1.8zM307.5,379.7h1.8v2.1h-1.8zM222.7,317.4h1.8v1.4h-1.8zM340.7,329.8h2.2v1.4h-2.2zM249.3,325.3h2.5v1.4h-2.5zM382.8,294.2h2.2v1.4h-2.2zM317.0,386.4h1.8v1.4h-1.8zM355.5,358.5h1.8v2.1h-1.8zM252.8,321.9h2.2v1.4h-2.2zM342.5,408.5h2.5v1.4h-2.5zM208.9,337.0h1.4v1.4h-1.4zM210.5,354.2h1.4v2.1h-1.4zM365.1,372.9h2.5v1.4h-2.5zM385.5,316.1h2.2v2.1h-2.2zM339.4,387.3h2.2v1.8h-2.2zM239.4,342.0h1.8v2.1h-1.8zM321.8,378.7h1.4v2.1h-1.4z" fill="#f2e21c" opacity="0.5"/>
<path d="M250.5,306.5 L256,308.5 L258,304 M256,308.5 L257.5,312.5" stroke="#f2e21c" stroke-width="1.4" fill="none" stroke-linecap="round"/>
<circle cx="250.6" cy="306.4" r="1.1" fill="#f0542c"/><circle cx="258.2" cy="303.6" r="1.1" fill="#f0542c"/>
<path d="M354.5,370 L358.5,372.5 L362,368 L368,364" stroke="#f2e21c" stroke-width="1.7" fill="none" stroke-linecap="round" stroke-linejoin="round"/>
<path d="M345.5,309 L343.5,314 L342,319.5 M342.5,316 L345,316.5" stroke="#f2e21c" stroke-width="1.4" fill="none" stroke-linecap="round"/>
</svg><!--/MOL--><div style="position:absolute;left:0;top:399.6px;width:534px;height:1.6px;background:#383838;"></div><pre id="vp" style="position:absolute;left:2.7px;top:402.5px;margin:0;font-family:'DejaVu Sans Mono',monospace;font-size:9.6px;letter-spacing:0.86px;line-height:10px;color:#ccccf6;-webkit-text-stroke:0.15px #ccccf6;">PyMOL&gt;<span style="position:relative;top:-1.4px">_</span></pre></div>
  <div id="panel">
    <div style="position:absolute;left:0;top:0;width:2px;height:415px;background:#2a2a2a;"></div>
    <div class="nm" style="left:1.3px;top:1.9px;width:110.2px;background:#6b6b6b;"><span>all</span></div>
    <div class="ob" style="left:112.9px;top:1.9px;background:#7b8df4;">A</div>
    <div class="ob" style="left:126.9px;top:1.9px;background:#9a9cd8;">S</div>
    <div class="ob" style="left:141.1px;top:1.9px;background:#6f71ad;">H</div>
    <div class="ob" style="left:155.1px;top:1.9px;background:#7b8df4;">L</div>
    <div class="ob obc" style="left:169.5px;top:1.9px;">C</div>
    <div class="nm" style="left:1.8px;top:16.5px;width:11.7px;background:#464646;"><span style="left:2.2px;top:-0.6px;transform:scaleX(1.7);transform-origin:0 50%;">-</span></div>
    <div class="nm" style="left:14.9px;top:16.5px;width:96.6px;background:#6b6b6b;"><span>AutoSol<i>_</i>run<i>_</i>1<i>_</i></span></div>
    <div class="ob" style="left:112.9px;top:16.5px;background:#7b8df4;">A</div>
    <div class="ob" style="left:126.9px;top:16.5px;background:#9a9cd8;">S</div>
    <div class="ob" style="left:141.1px;top:16.5px;background:#6f71ad;">H</div>
    <div class="ob" style="left:155.1px;top:16.5px;background:#7b8df4;">L</div>
    <div class="ob obc" style="left:169.5px;top:16.5px;">C</div>
    <div class="nm" style="left:7.7px;top:31.3px;width:103.8px;background:#424242;"><span>denmod<i>_</i>1</span></div>
    <div class="ob" style="left:112.9px;top:31.3px;background:#7b8df4;">A</div>
    <div class="ob" style="left:126.9px;top:31.3px;background:#9a9cd8;">S</div>
    <div class="ob" style="left:141.1px;top:31.3px;background:#6f71ad;">H</div>
    <div class="ob" style="left:155.1px;top:31.3px;background:#7b8df4;">L</div>
    <div class="ob obc" style="left:169.5px;top:31.3px;">C</div>
    <div class="nm" style="left:7.7px;top:46.3px;width:103.8px;background:#6b6b6b;"><span>overall<i>_</i>best<i>_</i>1</span></div>
    <div class="ob" style="left:112.9px;top:46.3px;background:#7b8df4;">A</div>
    <div class="ob" style="left:126.9px;top:46.3px;background:#9a9cd8;">S</div>
    <div class="ob" style="left:141.1px;top:46.3px;background:#6f71ad;">H</div>
    <div class="ob" style="left:155.1px;top:46.3px;background:#7b8df4;">L</div>
    <div class="ob obc" style="left:169.5px;top:46.3px;">C</div>
    <div class="nm" style="left:7.7px;top:61.4px;width:103.8px;background:#6b6b6b;"><span>denmod<i>_</i>1<i>_</i>m1</span></div>
    <div class="ob" style="left:112.9px;top:61.4px;background:#7b8df4;">A</div>
    <div class="ob" style="left:126.9px;top:61.4px;background:#9a9cd8;">S</div>
    <div class="ob" style="left:141.1px;top:61.4px;background:#6f71ad;">H</div>
    <div class="ob" style="left:155.1px;top:61.4px;background:#7b8df4;">L</div>
    <div class="ob obc" style="left:169.5px;top:61.4px;">C</div>
    <div style="position:absolute;left:0;top:294px;width:184px;height:2px;background:#1c1c1c;"></div>
    <div style="position:absolute;left:0;top:296px;width:184px;height:119px;background:#333333;"></div>
    <pre class="ml" style="top:299.00px"><span style="color:#6fe04a">Mouse Mode </span><span style="color:#e58878">3-Button Viewing</span></pre>
    <pre class="ml" style="top:309.04px"><span style="position:absolute;left:5px;color:#e58878">Buttons</span><span style="position:absolute;left:35.7px;color:#6f7cec">    L    M    R  Wheel</span></pre>
    <pre class="ml" style="top:319.08px"><span style="position:absolute;left:10px;color:#e58878">&amp;</span><span style="position:absolute;left:19.9px;color:#e58878">Keys</span><span style="color:#dcdcdc">        Rota Move MovZ Slab</span></pre>
    <pre class="ml" style="top:329.12px"><span style="position:absolute;left:19.9px;color:#6f7cec">Shft</span><span style="color:#dcdcdc">        +Box -Box Clip MovS</span></pre>
    <pre class="ml" style="top:339.16px"><span style="position:absolute;left:19.9px;color:#6f7cec">Ctrl</span><span style="color:#dcdcdc">        +/-  PkAt Pk1  MvSZ</span></pre>
    <pre class="ml" style="top:349.20px"><span style="position:absolute;left:19.9px;color:#6f7cec">CtSh</span><span style="color:#dcdcdc">        Sele Orig Clip MovZ</span></pre>
    <pre class="ml" style="top:359.24px"><span style="color:#6f7cec">SnglClk </span><span style="color:#dcdcdc">+/-  Cent Menu</span></pre>
    <pre class="ml" style="top:369.28px"><span style="color:#6f7cec"> DblClk </span><span style="color:#dcdcdc">Menu   -  PkAt</span></pre>
    <pre class="ml" style="top:379.32px"><span style="color:#6fe04a">Selecting </span><span style="color:#e58878">Residues</span></pre>
    <pre class="ml" style="top:389.36px"><span style="color:#6fe04a">State</span><span style="color:#dcdcdc">    1/   1</span></pre>
    <div style="position:absolute;left:0;top:398.5px;width:184px;height:16px;background:#0c0c0c;"></div><div style="position:absolute;left:1px;top:399.9px;width:4.2px;height:13.8px;background:linear-gradient(90deg,#a0a0a0,#686868);"></div>
    <div class="cb" style="left:7.10px;"><svg width="17.9" height="13.8" viewBox="0 0 17.8 13" preserveAspectRatio="none" style="position:absolute;left:0;top:0"><g fill="#f0b2b2" stroke="#f0b2b2" stroke-width="1.2" transform="translate(8.9 6.5) scale(0.8 0.82) translate(-8.9 -6.5)"><path stroke-linejoin="miter" d="M4.6 3.2 V9.8 M12.4 3.2 L6.2 6.5 L12.4 9.8 Z" /></g></svg></div>
    <div class="cb" style="left:26.63px;"><svg width="17.9" height="13.8" viewBox="0 0 17.8 13" preserveAspectRatio="none" style="position:absolute;left:0;top:0"><g fill="#f0b2b2" stroke="#f0b2b2" stroke-width="1.2" transform="translate(8.9 6.5) scale(0.8 0.82) translate(-8.9 -6.5)"><path stroke-linejoin="miter" d="M12.6 3.2 L5 6.5 L12.6 9.8 L10.4 6.5 Z"/></g></svg></div>
    <div class="cb" style="left:46.16px;"><svg width="17.9" height="13.8" viewBox="0 0 17.8 13" preserveAspectRatio="none" style="position:absolute;left:0;top:0"><g fill="#f0b2b2" stroke="#f0b2b2" stroke-width="1.2" transform="translate(8.9 6.5) scale(0.8 0.82) translate(-8.9 -6.5)"><rect x="5.4" y="3.2" width="7" height="6.6"/></g></svg></div>
    <div class="cb" style="left:65.69px;"><svg width="17.9" height="13.8" viewBox="0 0 17.8 13" preserveAspectRatio="none" style="position:absolute;left:0;top:0"><g fill="#f0b2b2" stroke="#f0b2b2" stroke-width="1.2" transform="translate(8.9 6.5) scale(0.8 0.82) translate(-8.9 -6.5)"><path stroke-linejoin="miter" d="M5.4 2.6 L13 6.5 L5.4 10.4 Z"/></g></svg></div>
    <div class="cb" style="left:85.22px;"><svg width="17.9" height="13.8" viewBox="0 0 17.8 13" preserveAspectRatio="none" style="position:absolute;left:0;top:0"><g fill="#f0b2b2" stroke="#f0b2b2" stroke-width="1.2" transform="translate(8.9 6.5) scale(0.8 0.82) translate(-8.9 -6.5)"><path stroke-linejoin="miter" d="M5.2 3.2 L12.8 6.5 L5.2 9.8 L7.4 6.5 Z"/></g></svg></div>
    <div class="cb" style="left:104.75px;"><svg width="17.9" height="13.8" viewBox="0 0 17.8 13" preserveAspectRatio="none" style="position:absolute;left:0;top:0"><g fill="#f0b2b2" stroke="#f0b2b2" stroke-width="1.2" transform="translate(8.9 6.5) scale(0.8 0.82) translate(-8.9 -6.5)"><path stroke-linejoin="miter" d="M13.2 3.2 V9.8 M5.4 3.2 L11.6 6.5 L5.4 9.8 Z"/></g></svg></div>
    <div class="cb" style="left:124.28px;"><span>S</span></div>
    <div class="cb" style="left:143.81px;"><svg width="17.9" height="13.8" viewBox="0 0 17.8 13" preserveAspectRatio="none" style="position:absolute;left:0;top:0"><g fill="#f0b2b2" stroke="#f0b2b2" stroke-width="1.2" transform="translate(8.9 6.5) scale(0.8 0.82) translate(-8.9 -6.5)"><path stroke-linejoin="miter" d="M4.6 3.4 L13.2 3.4 L8.9 10.2 Z"/></g></svg></div>
    <div class="cb" style="left:163.34px;"><span>F</span></div>
  </div>
</div>
<svg style="position:absolute;left:711.9px;top:554.3px;" width="14.5" height="14.5" viewBox="0 0 14.5 14.5"><g stroke-width="1"><path d="M14.5 1.7 L1.7 14.5 M14.5 4.4 L4.4 14.5 M14.5 7.1 L7.1 14.5 M14.5 9.8 L9.8 14.5 M14.5 12.5 L12.5 14.5" stroke="#4a4a4a"/><path d="M14.5 0.5 L0.5 14.5 M14.5 3.2 L3.2 14.5 M14.5 5.9 L5.9 14.5 M14.5 8.6 L8.6 14.5 M14.5 11.3 L11.3 14.5" stroke="#e6e6e6"/></g></svg>
</div>
</body>
</html>
